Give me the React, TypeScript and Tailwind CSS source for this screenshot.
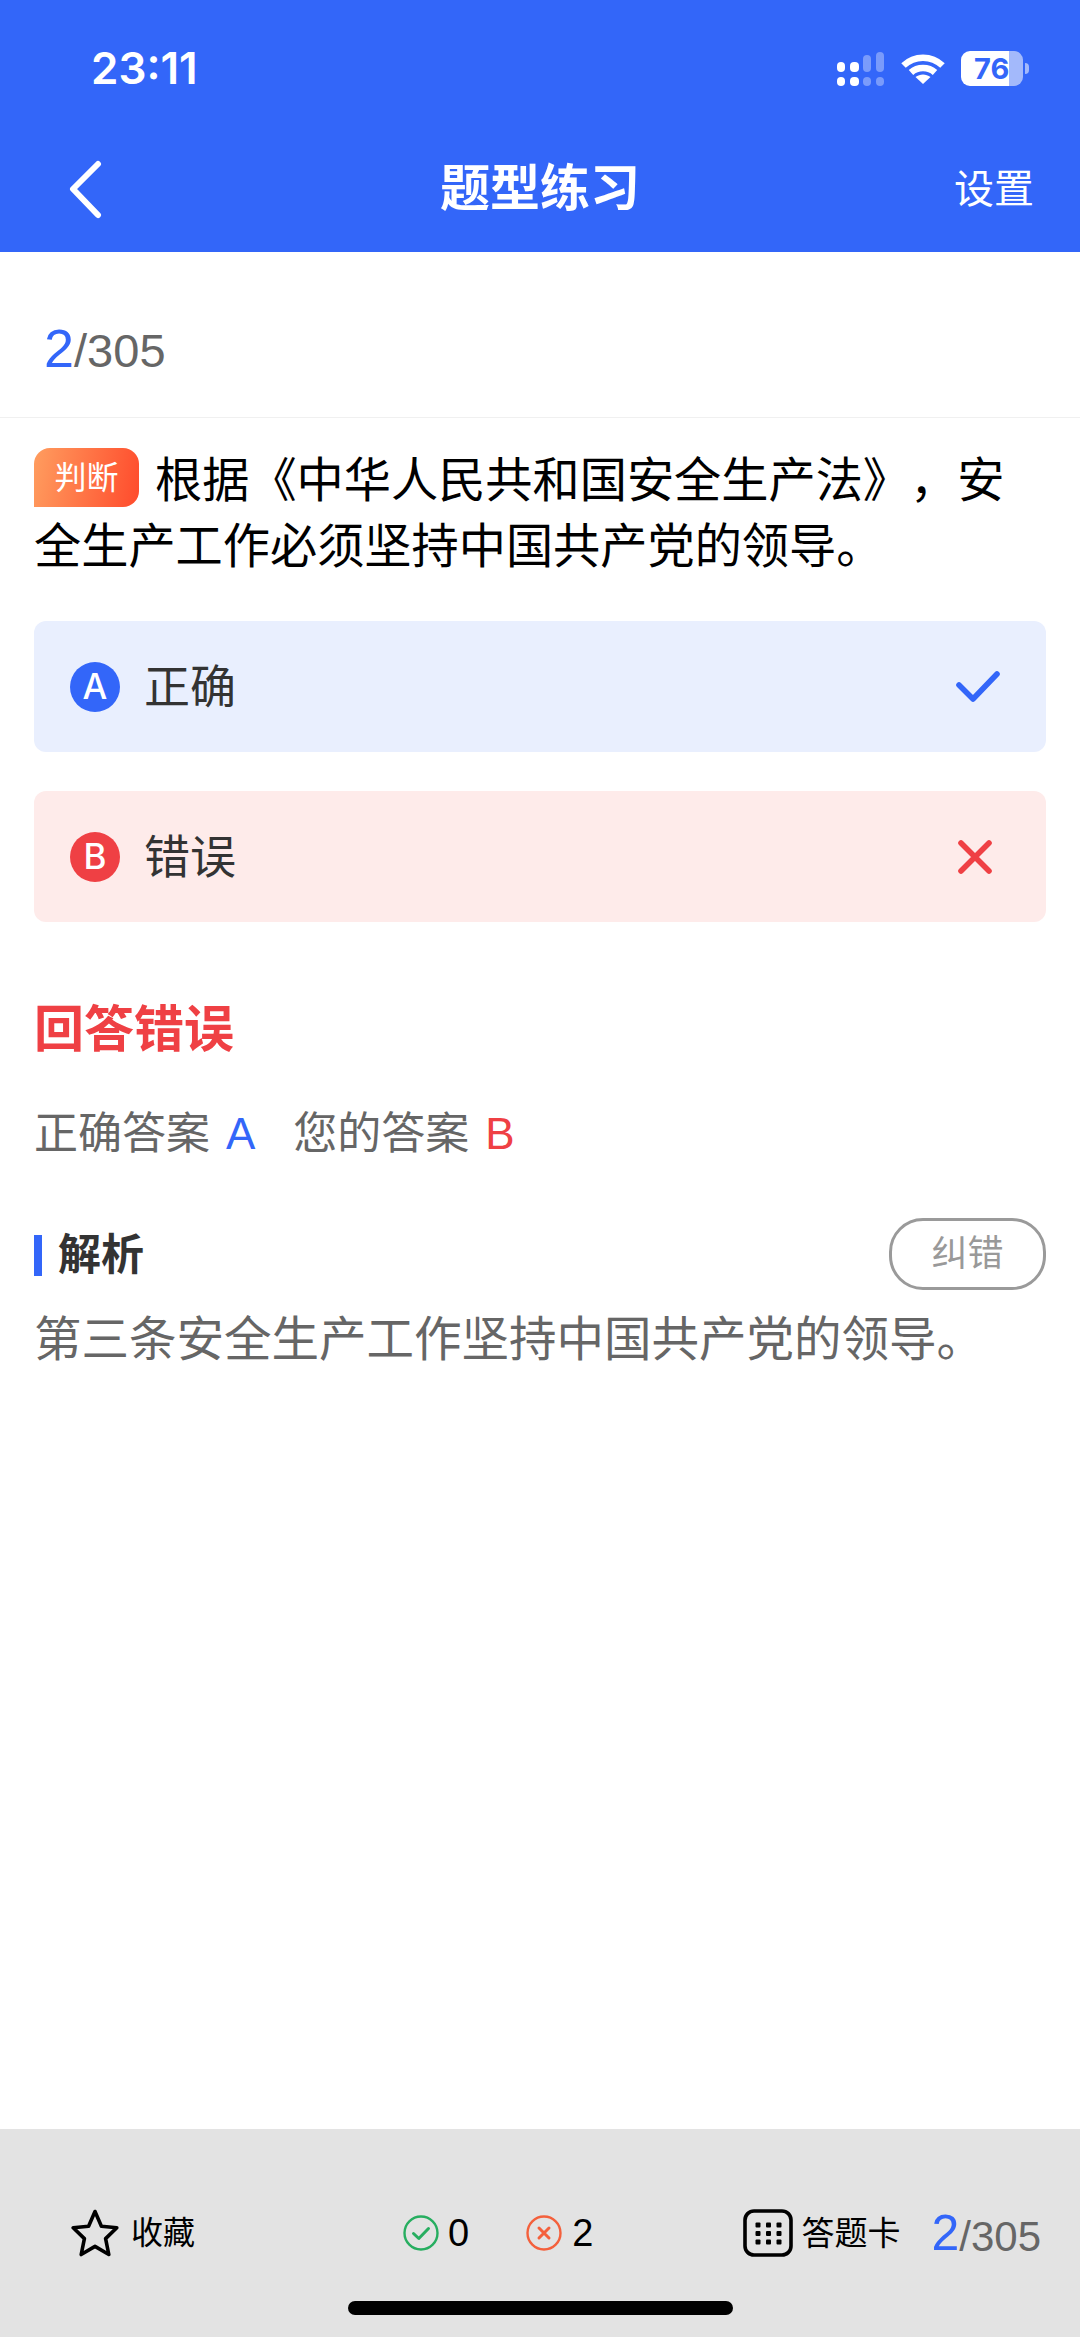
function SignalIcon() {
  return (
    <svg width="48" height="34" viewBox="0 0 48 34">
      <rect x="0" y="10" width="8" height="10" rx="4" fill="#fff" />
      <rect x="13" y="10" width="9" height="10" rx="4" fill="#fff" />
      <rect x="26" y="3" width="8" height="17" rx="4" fill="#fff" fillOpacity="0.35" />
      <rect x="39" y="0" width="8" height="20" rx="4" fill="#fff" fillOpacity="0.35" />
      <rect x="0" y="25" width="8" height="9" rx="4" fill="#fff" />
      <rect x="13" y="25" width="9" height="9" rx="4" fill="#fff" />
      <rect x="26" y="25" width="8" height="9" rx="4" fill="#fff" fillOpacity="0.35" />
      <rect x="39" y="25" width="8" height="9" rx="4" fill="#fff" fillOpacity="0.35" />
    </svg>
  );
}

function WifiIcon() {
  return (
    <svg width="44" height="30" viewBox="0 0 44 30" fill="none" stroke="#fff" strokeWidth="6.5">
      <path d="M2.5 11.5C13.5 1 30.5 1 41.5 11.5" />
      <path d="M10 18.5C16.5 12.5 27.5 12.5 34 18.5" />
      <path d="M22 30L14.5 23C19 19.5 25 19.5 29.5 23Z" fill="#fff" stroke="none" />
    </svg>
  );
}

function Battery() {
  return (
    <div className="flex items-center gap-[2px]">
      <div className="w-[62px] h-[35px] rounded-[9px] pl-[13px] flex items-center bg-[linear-gradient(90deg,#ffffff_77%,#a3b9fb_77%)] font-['Inter','Noto_Sans_CJK_SC',sans-serif] text-[29px] font-bold text-[#3366f9] leading-none">
        76
      </div>
      <div className="w-[4px] h-[11px] rounded-r-full bg-[#a3b9fb]" />
    </div>
  );
}

function StarIcon() {
  return (
    <svg width="48" height="48" viewBox="0 0 48 48" fill="none" stroke="#000" strokeWidth="3.6" strokeLinejoin="round">
      <path d="M24 2.5L30.4 17.2L45.8 18.8L34.6 29.6L37.8 45.5L24 37.4L10.2 45.5L13.4 29.6L2.2 18.8L17.6 17.2Z" />
    </svg>
  );
}

function GridIcon() {
  const spots = [15, 25.5, 36];
  const rows = [16, 24.5, 33];
  return (
    <svg width="50" height="48" viewBox="0 0 50 48" fill="none">
      <rect x="2" y="2" width="46" height="44" rx="9" stroke="#000" strokeWidth="3.6" />
      {rows.map((y) => spots.map((x) => <rect key={`${x}-${y}`} x={x - 2.5} y={y - 2.5} width="5" height="5" rx="1" fill="#000" />))}
    </svg>
  );
}

function RoundIcon({ color, kind }: { color: string; kind: 'check' | 'cross' }) {
  return (
    <svg width="36" height="36" viewBox="0 0 36 36" fill="none" stroke={color}>
      <circle cx="18" cy="18" r="16.5" strokeWidth="2.4" />
      {kind === 'check' ? (
        <path d="M10.5 18.5L15.8 23.5L25.5 13.5" strokeWidth="3" strokeLinecap="round" strokeLinejoin="round" />
      ) : (
        <path d="M13 13L23 23M23 13L13 23" strokeWidth="3" strokeLinecap="round" />
      )}
    </svg>
  );
}

function OptionRow({ letter, label, tone }: { letter: string; label: string; tone: 'right' | 'wrong' }) {
  const right = tone === 'right';
  return (
    <div className={`h-[131px] rounded-[12px] pl-[36px] pr-[46px] flex items-center ${right ? 'bg-[#e9effe]' : 'bg-[#feebea]'}`}>
      <div className={`w-[50px] h-[50px] rounded-full flex items-center justify-center font-['Inter',sans-serif] font-medium text-white text-[35px] leading-none ${right ? 'bg-[#3366f9]' : 'bg-[#ef4044]'}`}>
        {letter}
      </div>
      <span className="ml-[24px] text-[46px] leading-none text-[#333]">{label}</span>
      <div className="ml-auto">
        {right ? (
          <svg width="44" height="32" viewBox="0 0 44 32" fill="none" stroke="#3366f9" strokeWidth="5.6" strokeLinecap="round" strokeLinejoin="round">
            <path d="M3 14L17 28L41 3" />
          </svg>
        ) : (
          <svg width="34" height="34" viewBox="0 0 34 34" fill="none" stroke="#ef4044" strokeWidth="5.6" strokeLinecap="round" className="mr-[8px]">
            <path d="M3 3L31 31M31 3L3 31" />
          </svg>
        )}
      </div>
    </div>
  );
}

export default function App() {
  return (
    <div className="w-[1080px] h-[2337px] relative flex flex-col bg-white font-['Liberation_Sans','Noto_Sans_CJK_SC',sans-serif]">
      <header className="h-[252px] shrink-0 bg-[#3366f9] text-white">
        <div className="h-[136px] pt-[46px] pl-[91px] pr-[51px] flex justify-between items-start">
          <span className="font-['Inter',sans-serif] text-[44px] font-semibold leading-[44px]">23:11</span>
          <div className="flex items-center gap-[16px] pt-[5px]">
            <SignalIcon />
            <WifiIcon />
            <Battery />
          </div>
        </div>
        <div className="h-[106px] flex items-center justify-between pl-[62px] pr-[46px]">
          <div className="w-[74px]">
            <svg width="44" height="60" viewBox="0 0 44 60" fill="none" stroke="#fff" strokeWidth="6" strokeLinecap="round" strokeLinejoin="round">
              <path d="M36 5L11 30L36 56" />
            </svg>
          </div>
          <h1 className="text-[50px] font-bold leading-none">题型练习</h1>
          <div className="w-[90px] text-right text-[40px] leading-none">设置</div>
        </div>
      </header>

      <div className="h-[166px] shrink-0 pl-[44px] pt-[26px] flex items-center border-b border-[#f0f0f0] text-[#666]">
        <span className="text-[54px] text-[#3366f9] leading-none">2</span>
        <span className="text-[47px] leading-none mt-[6px]">/305</span>
      </div>

      <main className="flex-1 px-[34px] pt-[30px]">
        <p className="text-[47.2px] leading-[66px] text-black [text-spacing-trim:space-all]">
          <span className="inline-flex w-[105px] h-[59px] align-top mr-[16px] items-center justify-center rounded-[16px] rounded-bl-none bg-[linear-gradient(100deg,#ff9d5f,#ff4b2c)] text-[32px] text-white leading-none">
            判断
          </span>
          根据《中华人民共和国安全生产法》，安
          <br />
          全生产工作必须坚持中国共产党的领导。
        </p>

        <div className="mt-[41px] flex flex-col gap-[39px]">
          <OptionRow letter="A" label="正确" tone="right" />
          <OptionRow letter="B" label="错误" tone="wrong" />
        </div>

        <h2 className="mt-[80px] text-[50px] font-bold leading-[56px] text-[#ef4044]">回答错误</h2>

        <div className="mt-[50px] flex items-center text-[44px] leading-[52px] text-[#666]">
          <span>正确答案</span>
          <span className="ml-[16px] text-[#3366f9]">A</span>
          <span className="ml-[38px]">您的答案</span>
          <span className="ml-[16px] text-[#ef4044]">B</span>
        </div>

        <div className="mt-[58px] flex items-center justify-between">
          <div className="flex items-center gap-[16px] pt-[2px]">
            <div className="w-[8px] h-[41px] bg-[#3366f9]" />
            <span className="text-[43px] font-bold leading-none text-[#333]">解析</span>
          </div>
          <div className="w-[157px] h-[72px] rounded-[34px] border-[3px] border-[#9a9a9a] flex items-center justify-center text-[36px] leading-none text-[#999]">
            纠错
          </div>
        </div>

        <p className="mt-[17px] text-[47.5px] leading-[66px] text-[#666]">第三条安全生产工作坚持中国共产党的领导。</p>
      </main>

      <footer className="h-[208px] shrink-0 bg-[#e3e3e3] pl-[71px] pr-[39px] pt-[80px] flex items-start text-black">
        <div className="flex items-center gap-[12px]">
          <StarIcon />
          <span className="text-[32px] leading-none">收藏</span>
        </div>
        <div className="ml-[208px] h-[48px] flex items-center">
          <RoundIcon color="#27ae60" kind="check" />
          <span className="ml-[9px] text-[38px] leading-none">0</span>
          <div className="ml-[57px]">
            <RoundIcon color="#f4603c" kind="cross" />
          </div>
          <span className="ml-[10px] text-[38px] leading-none">2</span>
        </div>
        <div className="ml-auto h-[48px] flex items-center">
          <GridIcon />
          <span className="ml-[8px] text-[33px] leading-none">答题卡</span>
          <span className="ml-[31px] text-[50px] leading-none text-[#3366f9]">2</span>
          <span className="text-[42px] leading-none mt-[8px] text-[#666]">/305</span>
        </div>
      </footer>

      {/* home indicator sits over the bar */}
      <div className="absolute left-[348px] top-[2301px] w-[385px] h-[14px] rounded-full bg-black" />
    </div>
  );
}
